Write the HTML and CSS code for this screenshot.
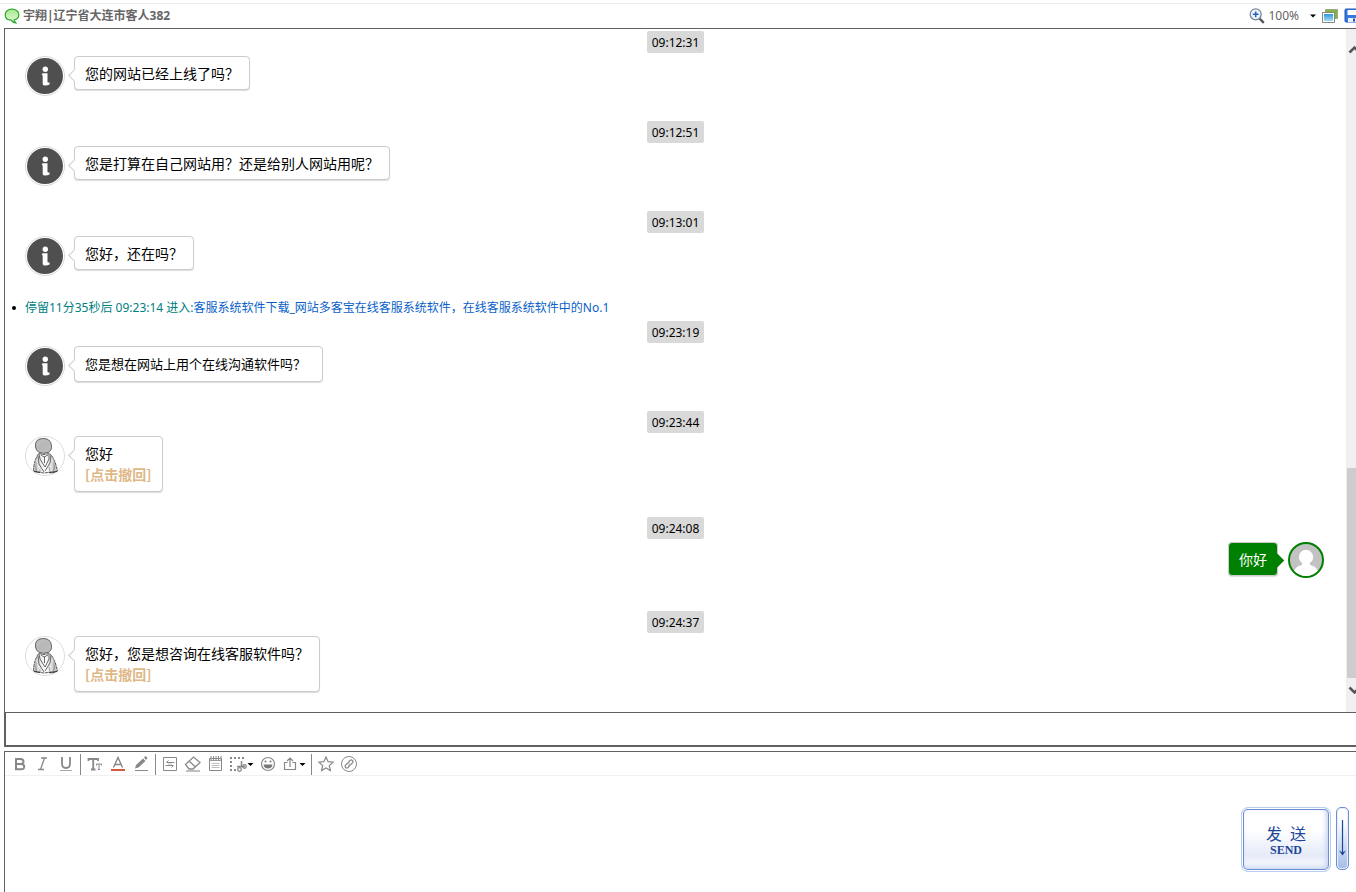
FILE: index.html
```html
<!DOCTYPE html>
<html lang="zh-CN">
<head>
<meta charset="utf-8">
<meta name="viewport" content="width=device-width, initial-scale=1">
<title>宇翔|辽宁省大连市客人382</title>
<link rel="stylesheet" href="styles.css">
</head>
<body>
<svg class="defs" aria-hidden="true">
  <defs>
    <linearGradient id="leaf" x1="0" y1="0" x2="0" y2="1"><stop offset="0" stop-color="#a9e88f"/><stop offset="1" stop-color="#e2fbd6"/></linearGradient>
    <linearGradient id="sky" x1="0" y1="0" x2="0" y2="1"><stop offset="0" stop-color="#2f96d8"/><stop offset="1" stop-color="#a4dcf6"/></linearGradient>
    <linearGradient id="body" x1="0" y1="0" x2="1" y2="0"><stop offset="0" stop-color="#ccc"/><stop offset=".5" stop-color="#fff"/><stop offset="1" stop-color="#bbb"/></linearGradient>
    <symbol id="info" viewBox="0 0 40 40">
      <circle cx="20" cy="20" r="19.5" fill="#fff" stroke="#d8d8d8"/>
      <circle cx="20" cy="20" r="18" fill="#4f4f4f"/>
      <circle cx="20.300" cy="13.200" r="2.700" fill="#fff"/>
      <path d="M17.700 17.300h4.800v8.700q.6 1 2 .2v2.300q-3 1.500-6 .8-1-.5-.8-2.300v-7.500q-.8-.6-1-1z" fill="#fff"/>
    </symbol>
    <symbol id="agent" viewBox="0 0 40 40">
      <circle cx="20" cy="20" r="19.500" fill="#fff" stroke="#ddd"/>
      <path d="M14 17q5 3 10 0 5 4 7.500 14l1 4-5 2-4-.5-5 .5-5-1-5-1q0-10 5.500-18z" fill="url(#body)" stroke="#555" stroke-dasharray="3 .7"/>
      <path d="M10.500 11q-1-8 7-8.500 8-.5 9 7 .5 5-3.500 7-5 2-9.500-.5-2.500-1.500-3-5z" fill="#bcbcbc" stroke="#555" stroke-width=".9"/>
      <path d="M13 12l7-7M14 14l9-9M17 15l8-8" stroke="#aaa" stroke-width=".6"/>
      <path d="M14 18l1 5 5 8 4-8v-5M13 20l1 8 5 8M26 19l-1 8-5 8M16 19l3 2 4-2M19.500 21v6" fill="none" stroke="#444" stroke-width=".8"/>
      <path d="M11 26v9M29 26v8M10 30l2 5M30 29l-2 7M15 33v3M24 31l1 5" fill="none" stroke="#888" stroke-width=".7"/>
      <path d="M9 35.500l6 1M24 36.500l8-1" stroke="#333" stroke-width="1.200"/>
    </symbol>
  </defs>
</svg>
<div class="window">
  <header class="titlebar">
    <svg class="ico" viewBox="0 0 16 16"><path d="M8 1.200c4 0 6.800 2.300 6.800 5.500 0 2.700-2 4.700-4.800 5.300.3 1.200.9 2 1.800 2.900-2.300-.2-3.800-1.200-4.800-2.700C3.500 12 1.200 9.700 1.200 6.700c0-3.200 2.800-5.500 6.800-5.500z" fill="url(#leaf)" stroke="#27a827" stroke-width="1.200"/></svg>
    <h1 class="title">宇翔|辽宁省大连市客人382</h1>
    <div class="tools">
      <button class="zoom" type="button" aria-label="缩放 100%">
        <svg class="ico" viewBox="0 0 16 16"><path d="M10.500 10.500l4.300 4.300" stroke="#555" stroke-width="2.400"/><circle cx="6.700" cy="6.300" r="5.500" fill="#edf5fd" stroke="#7b8796" stroke-width="1.300"/><path d="M3.800 6.300h5.800M6.700 3.400v5.800" stroke="#2a5fc4" stroke-width="1.600"/></svg>
        <span class="percent">100%</span>
        <svg class="caret" viewBox="0 0 6 4"><path d="M0 .5h6l-3 3z"/></svg>
      </button>
      <button class="plain" type="button" aria-label="图片"><svg class="ico" viewBox="0 0 16 16"><path d="M3.500 1.500h12v9h-12z" fill="#80b53f" stroke="#9aa690"/><path d="M.5 4.500h12v10H.5z" fill="#fff" stroke="#858585"/><path d="M2 6h9v7H2z" fill="url(#sky)"/></svg></button>
      <button class="plain" type="button" aria-label="保存"><svg class="ico" viewBox="0 0 16 16"><path d="M1 2q0-1 1-1h13v13H2q-1 0-1-1z" fill="#3476dc" stroke="#2055b4"/><path d="M3.500 2h10v5h-10z" fill="#fff"/><path d="M4 10h8v4H4z" fill="#e8effa"/><path d="M9 10.500h2v3H9z" fill="#2055b4"/></svg></button>
    </div>
  </header>

  <main class="panel">
    <div class="log">
      <article class="entry"><time class="stamp">09:12:31</time><div class="line"><svg class="avatar"><use href="#info"/></svg><p class="bubble">您的网站已经上线了吗？</p></div></article>
      <article class="entry"><time class="stamp">09:12:51</time><div class="line"><svg class="avatar"><use href="#info"/></svg><p class="bubble">您是打算在自己网站用？还是给别人网站用呢？</p></div></article>
      <article class="entry"><time class="stamp">09:13:01</time><div class="line"><svg class="avatar"><use href="#info"/></svg><p class="bubble">您好，还在吗？</p></div></article>
      <p class="visit"><span class="dot"></span><span>停留11分35秒后 09:23:14 进入:<a class="page" href="#">客服系统软件下载_网站多客宝在线客服系统软件，在线客服系统软件中的No.1</a></span></p>
      <article class="entry"><time class="stamp">09:23:19</time><div class="line"><svg class="avatar"><use href="#info"/></svg><p class="bubble small">您是想在网站上用个在线沟通软件吗？</p></div></article>
      <article class="entry"><time class="stamp">09:23:44</time><div class="line"><svg class="avatar"><use href="#agent"/></svg><div class="bubble">您好<button class="recall" type="button">[点击撤回]</button></div></div></article>
      <article class="entry own"><time class="stamp">09:24:08</time><div class="line"><p class="bubble">你好</p><svg class="avatar" viewBox="0 0 36 36"><clipPath id="face"><circle cx="18" cy="18" r="16"/></clipPath><circle cx="18" cy="18" r="17" fill="#c2c2c2" stroke="#008000" stroke-width="2"/><g clip-path="url(#face)" fill="#fff"><circle cx="18" cy="15" r="7.200"/><path d="M14 19h8v4q6 1 8 6v7H6v-7q2-5 8-6z"/></g></svg></div></article>
      <article class="entry"><time class="stamp">09:24:37</time><div class="line"><svg class="avatar"><use href="#agent"/></svg><div class="bubble">您好，您是想咨询在线客服软件吗？<button class="recall" type="button">[点击撤回]</button></div></div></article>
    </div>
    <div class="scroll" aria-hidden="true">
      <svg class="arrow" viewBox="0 0 17 17"><path d="M3.500 10.500l5-5 5 5" fill="none" stroke="#555" stroke-width="2.500"/></svg>
      <div class="track"><div class="thumb"></div></div>
      <svg class="arrow" viewBox="0 0 17 17"><path d="M3.500 5.500l5 5 5-5" fill="none" stroke="#555" stroke-width="2.500"/></svg>
    </div>
  </main>

  <div class="notice"></div>

  <section class="editor">
    <div class="bar">
      <button class="tool" type="button" aria-label="粗体"><svg viewBox="0 0 23 22"><path d="M8 6h4.500q3 0 3 2.500t-3 2.500H8zM8 11h5q3.200 0 3.200 2.700T13 16.300H8z" fill="none" stroke="#888" stroke-width="2"/></svg></button>
      <button class="tool" type="button" aria-label="斜体"><svg viewBox="0 0 23 22"><path d="M10 5h6M7 16.500h6M13.500 5l-4 11.500" fill="none" stroke="#888" stroke-width="1.300"/></svg></button>
      <button class="tool" type="button" aria-label="下划线"><svg viewBox="0 0 23 22"><path d="M8 4v6.500q0 4.500 4 4.500t4-4.500V4" fill="none" stroke="#888" stroke-width="1.800"/><path d="M6 17.500h12" stroke="#aaa"/></svg></button>
      <span class="sep"></span>
      <button class="tool" type="button" aria-label="字体"><svg viewBox="0 0 23 22"><path d="M5.500 8V6h9.500v2M10.200 6v10.500M8 16.500h4.500" fill="none" stroke="#888" stroke-width="1.800"/><path d="M13.500 12.500v-1.500h5v1.500M16 11v5.500M15 16.500h2" fill="none" stroke="#888"/></svg></button>
      <button class="tool" type="button" aria-label="文字颜色"><svg viewBox="0 0 23 22"><path d="M7.500 14.500L12 4.500l4.500 10M9 11.500h6" fill="none" stroke="#888" stroke-width="1.400"/><path d="M5 16h14v2H5z" fill="#cf5b3d"/></svg></button>
      <button class="tool" type="button" aria-label="画笔"><svg viewBox="0 0 23 22"><path d="M6 15.500l1-3.500 7-6.500 2.500 2.500-7 6.500zM15 4.500l1.500-1.500 2 2-1.500 2z" fill="#888"/><path d="M6 17.500h13" stroke="#888"/></svg></button>
      <span class="sep"></span>
      <button class="tool" type="button" aria-label="快捷回复"><svg viewBox="0 0 23 22"><path d="M5.500 4.500h13v13h-13z" fill="none" stroke="#888"/><path d="M16.500 9.500h-8l2-2M7.500 12.500h8l-2 2" fill="none" stroke="#888"/><path d="M10 11h4" stroke="#bbb"/></svg></button>
      <button class="tool" type="button" aria-label="清除"><svg viewBox="0 0 23 22"><path d="M4.500 11.500l8-7.500 6.500 5.500-7 6.500H8zM8 8l6.500 6" fill="none" stroke="#888" stroke-width="1.300"/><path d="M5 18h14" stroke="#aaa" stroke-width="1.500"/></svg></button>
      <button class="tool" type="button" aria-label="记录"><svg viewBox="0 0 23 22"><path d="M5.500 5.500h12v12h-12z" fill="none" stroke="#888"/><path d="M7 3v4M9.500 3v4M12 3v4M14.500 3v4M17 3v4" stroke="#888"/><path d="M5.500 7.500h12" stroke="#999"/><path d="M7.500 10.500h8M7.500 12.500h8M7.500 14.500h8" stroke="#bbb"/></svg></button>
      <button class="tool wide" type="button" aria-label="截图"><svg viewBox="0 0 29 22"><path d="M3 4h2v2H3zM7 4h2v2H7zM11 4h2v2h-2zM15 4h2v2h-2zM3 8h2v2H3zM3 12h2v2H3zM3 16h2v2H3zM7 16h2v2H7z" fill="#888"/><path d="M14.500 8v6.500M10 13.500h8" fill="none" stroke="#888" stroke-width="1.500"/><circle cx="12.500" cy="16.500" r="1.800" fill="none" stroke="#888" stroke-width="1.300"/><circle cx="17.500" cy="13.500" r="1.800" fill="none" stroke="#888" stroke-width="1.300"/><path d="M20.500 10h6l-3 3z" fill="#000"/></svg></button>
      <button class="tool" type="button" aria-label="表情"><svg viewBox="0 0 23 22"><circle cx="12" cy="11" r="6.500" fill="none" stroke="#888" stroke-width="1.200"/><circle cx="9.500" cy="8.500" r="1" fill="#777"/><circle cx="14.500" cy="8.500" r="1" fill="#777"/><path d="M7.500 11.500h9q-.5 4-4.500 4t-4.500-4z" fill="#777"/></svg></button>
      <button class="tool wide" type="button" aria-label="发送文件"><svg viewBox="0 0 29 22"><path d="M8.500 9.500h-3v7h11v-7h-3M11 14V5.500M8 8l3-3 3 3" fill="none" stroke="#888" stroke-width="1.200"/><path d="M20.500 10h6l-3 3z" fill="#000"/></svg></button>
      <span class="sep"></span>
      <button class="tool" type="button" aria-label="收藏"><svg viewBox="0 0 23 22"><path d="M12 4l2.100 4.700 5 .5-3.800 3.400 1.100 5L12 15l-4.400 2.600 1.100-5-3.800-3.400 5-.5z" fill="none" stroke="#888" stroke-width="1.200"/></svg></button>
      <button class="tool" type="button" aria-label="链接"><svg viewBox="0 0 23 22"><circle cx="12" cy="11" r="7.500" fill="none" stroke="#888"/><path d="M11.500 9l1.700-1.700q1.200-.8 2.200.2t.2 2.200l-2 2q-1 .8-2 0M12.500 13l-1.700 1.700q-1.200.8-2.200-.2t-.2-2.200l2-2q1-.8 2 0" fill="none" stroke="#888" stroke-width="1.200"/></svg></button>
    </div>
    <div class="compose">
      <textarea class="input" aria-label="输入消息"></textarea>
      <div class="actions">
        <button class="send" type="button"><span class="send-cn"><span>发</span><span>送</span></span><span class="send-en">SEND</span></button>
        <button class="more" type="button" aria-label="发送选项"><svg viewBox="0 0 9 40"><path d="M4.500 1v35" stroke="#1d4699" stroke-width="1.200"/><path d="M1 31.500l3.500 2 3.500-2-3.500 5z" fill="#1d4699"/></svg></button>
      </div>
    </div>
  </section>
</div>
</body>
</html>
```
FILE: styles.css
```css
* { box-sizing: border-box; }

body {
  margin: 0;
  background: #fff;
  color: #000;
  font-family: "Noto Sans", "Noto Sans CJK SC", sans-serif;
  font-size: 12px;
}

button {
  margin: 0;
  padding: 0;
  border: 0;
  background: none;
  color: inherit;
  font: inherit;
}

p, h1 { margin: 0; }
svg { display: block; flex: none; }

.defs { position: absolute; width: 0; height: 0; }

.window {
  display: flex;
  flex-direction: column;
  height: 100vh;
  padding: 3px 0 0 4px;
  overflow: hidden;
}

.titlebar {
  display: flex;
  flex: none;
  align-items: center;
  height: 25px;
  margin-left: -4px;
  padding-left: 4px;
  border-top: 1px solid #ededed;
}

.ico { width: 16px; height: 16px; }

.title {
  flex: 1;
  margin-left: 3px;
  color: #666;
  font-size: 12px;
  font-weight: 700;
  line-height: 18px;
}

.tools {
  display: flex;
  gap: 6px;
  margin-right: -4px;
}

.zoom { display: flex; align-items: center; }
.percent { margin: 0 11px 0 3px; color: #666; line-height: 16px; }
.caret { width: 6px; height: 4px; }

.panel {
  display: flex;
  flex: 1;
  min-height: 0;
  border: solid #606060;
  border-width: 1px 0 0 1px;
}

.log {
  flex: 1;
  min-width: 0;
  padding-top: 2px;
  overflow: hidden;
}

.entry {
  display: flex;
  flex-direction: column;
  gap: 3px;
  padding-bottom: 25px;
}

.stamp {
  align-self: center;
  padding: 1px 5px 0;
  border-radius: 2px;
  background: #d9d9d9;
  line-height: 21px;
}

.line {
  display: flex;
  align-items: flex-start;
  gap: 9px;
  padding: 0 22px 0 20px;
}

.avatar { width: 40px; height: 40px; }

.bubble {
  position: relative;
  padding: 6px 10px;
  border: 1px solid #ccc;
  border-radius: 4px;
  background: #fff;
  box-shadow: 0 1px 1px #ddd;
  font-family: "Noto Sans CJK SC", sans-serif;
  font-size: 14px;
  line-height: 20px;
}

.bubble::before {
  content: "";
  position: absolute;
  top: 14px;
  left: -5px;
  width: 8px;
  height: 8px;
  border: solid #ccc;
  border-width: 0 0 1px 1px;
  background: #fff;
  transform: rotate(45deg);
}

.small { padding-right: 16px; font-size: 13px; line-height: 22px; }

.recall {
  display: block;
  color: #deb887;
  font-weight: 700;
  line-height: 22px;
}

.own .line {
  justify-content: flex-end;
  gap: 10px;
  min-height: 44px;
}

.own .bubble {
  background: #008000;
  color: #fff;
}

.own .bubble::before {
  top: 12px;
  right: -5px;
  left: auto;
  width: 11px;
  height: 11px;
  border: 0;
  background: #008000;
}

.own .avatar { width: 36px; height: 36px; }

.visit {
  display: flex;
  align-items: center;
  gap: 9px;
  height: 20px;
  padding: 0 7px 6px;
  color: #008080;
  line-height: 16px;
}

.dot { width: 4px; height: 4px; border-radius: 2px; background: #000; }
.page { color: #0a5fc8; text-decoration: none; }

.scroll {
  display: flex;
  flex: none;
  flex-direction: column;
  width: 17px;
  margin-right: -7px;
  padding: 13px 0;
  background: #f0f0f0;
}

.arrow { width: 17px; height: 17px; }

.track {
  display: flex;
  flex: 1;
  align-items: flex-end;
  padding: 0 1px 4px;
}

.thumb { width: 100%; height: 34%; background: #cdcdcd; }

.notice {
  flex: none;
  height: 35px;
  border: solid #606060;
  border-width: 1px 0 2px 2px;
}

.editor {
  flex: none;
  margin-top: 4px;
  border: solid #606060;
  border-width: 1px 0 0 1px;
}

.bar {
  display: flex;
  align-items: center;
  padding: 1px 3px 0;
  border-bottom: 1px solid #f0f0f0;
}

.tool { width: 23px; height: 22px; }
.tool svg { width: 100%; height: 100%; }
.wide { width: 29px; }
.sep { width: 1px; height: 21px; margin: 0 2px 0 3px; background: #888; }

.compose { display: flex; height: 116px; }

.input {
  flex: 1;
  padding: 6px;
  border: 0;
  outline: 0;
  resize: none;
  font: inherit;
}

.actions {
  display: flex;
  align-items: flex-start;
  gap: 5px;
  padding: 31px 7px 0 0;
}

.send {
  display: flex;
  flex-direction: column;
  align-items: center;
  justify-content: center;
  width: 90px;
  height: 65px;
  border: 1px solid #b9cdf0;
  border-radius: 7px;
  background: linear-gradient(#fff 35%, #e6ebf9 75%, #fff);
  box-shadow: inset 0 0 0 1px #fff, inset 0 0 0 2px #6b8fd4, inset -2px -2px 5px 2px #c5d2ef;
  color: #1d4699;
}

.send-cn {
  display: flex;
  gap: 8px;
  font-family: "Noto Sans CJK SC", sans-serif;
  font-size: 16px;
  line-height: 20px;
}

.send-en {
  font-family: "Liberation Serif", serif;
  font-size: 12px;
  font-weight: 700;
  line-height: 14px;
}

.more {
  display: flex;
  align-items: center;
  justify-content: center;
  width: 13px;
  height: 63px;
  border: 1px solid #6b8fd4;
  border-radius: 5px;
  background: linear-gradient(#fff 20%, #a5bce8);
  box-shadow: inset 0 0 0 1px #e8effb;
}

.more svg { width: 9px; height: 40px; }
```
